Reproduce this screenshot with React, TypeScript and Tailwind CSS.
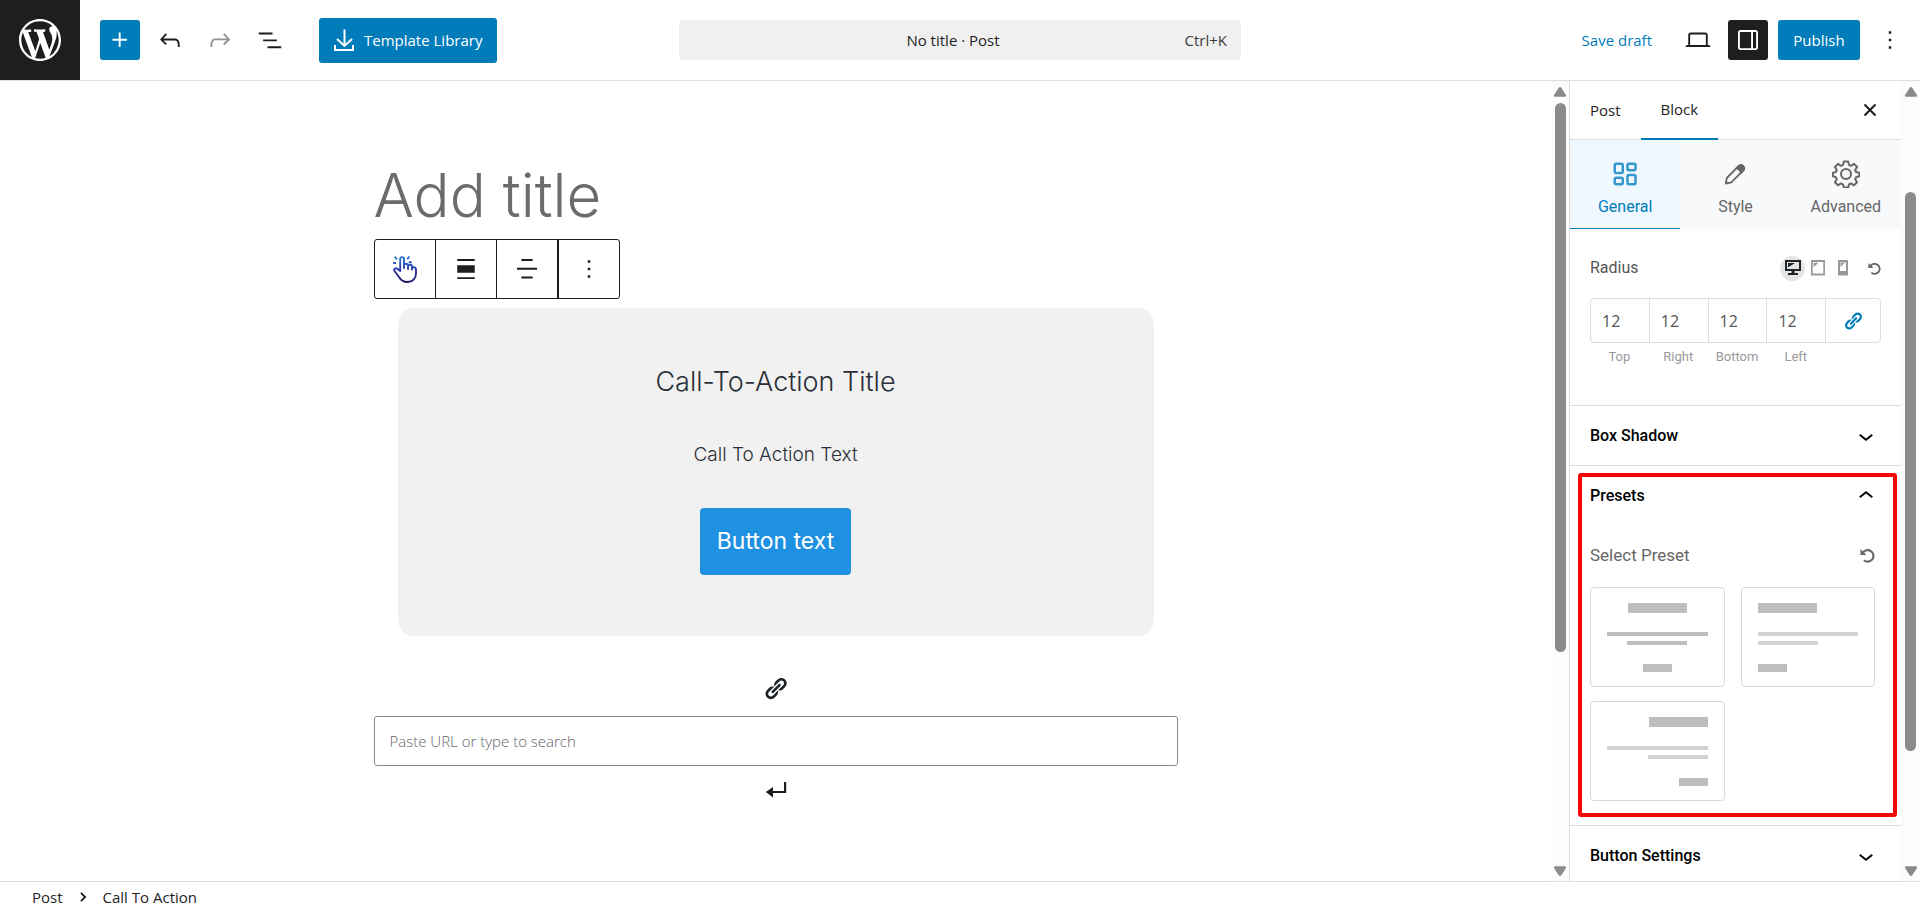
import type { ReactNode } from "react";

const INK = "#1e1e1e";

type Align = "center" | "left" | "right";

const presets: { align: Align; label: string; line: string }[] = [
  { align: "center", label: "Centered preset", line: "#bebebe" },
  { align: "left", label: "Left aligned preset", line: "#d3d3d3" },
  { align: "right", label: "Right aligned preset", line: "#d3d3d3" },
];

const sides = ["Top", "Right", "Bottom", "Left"];

/* ---------- icons ---------- */

function WordPressLogo() {
  return (
    <svg viewBox="0 0 20 20" className="size-[42px]" fill="#fff" aria-hidden>
      <path d="M20 10c0-5.51-4.49-10-10-10C4.48 0 0 4.49 0 10c0 5.52 4.48 10 10 10 5.51 0 10-4.48 10-10zM7.78 15.37L4.37 6.22c.55-.02 1.17-.08 1.17-.08.5-.06.44-1.13-.06-1.11 0 0-1.45.11-2.37.11-.18 0-.37 0-.58-.01C4.12 2.69 6.87 1.11 10 1.11c2.33 0 4.45.87 6.05 2.34-.68-.11-1.65.39-1.65 1.58 0 .74.45 1.36.9 2.1.35.61.55 1.36.55 2.46 0 1.49-1.4 5-1.4 5l-3.03-8.37c.54-.02.82-.17.82-.17.5-.05.44-1.25-.06-1.22 0 0-1.44.12-2.38.12-.87 0-2.33-.12-2.33-.12-.5-.03-.56 1.2-.06 1.22l.92.08 1.26 3.41zM17.41 10c.24-.64.74-1.87.43-4.25.7 1.29 1.05 2.71 1.05 4.25 0 3.29-1.73 6.24-4.4 7.78.97-2.59 1.94-5.2 2.92-7.78zM6.1 18.09C3.12 16.65 1.11 13.53 1.11 10c0-1.3.23-2.48.72-3.59C3.25 10.3 4.67 14.2 6.1 18.09zm4.03-6.63l2.58 6.98c-.86.29-1.76.45-2.71.45-.79 0-1.57-.11-2.29-.33.81-2.38 1.62-4.74 2.42-7.1z" />
    </svg>
  );
}

function Glyph({ d, className = "size-[30px]" }: { d: string; className?: string }) {
  return (
    <svg viewBox="0 0 24 24" className={className} fill="currentColor" aria-hidden>
      <path d={d} />
    </svg>
  );
}

const glyphs = {
  plus: "M11 12.5V17.5H12.5V12.5H17.5V11H12.5V6H11V11H6V12.5H11Z",
  undo: "M18.3 11.7c-.6-.6-1.4-.9-2.3-.9H6.7l2.9-3.3-1.1-1-4.5 5L8.5 16l1-1-2.7-2.7H16c.5 0 .9.2 1.3.5 1 1 1 3.4 1 4.5v.3h1.5v-.2c0-1.5 0-4.3-1.5-5.7z",
  redo: "M15.6 6.5l-1.1 1 2.9 3.3H8c-.9 0-1.7.3-2.3.9-1.4 1.5-1.4 4.2-1.4 5.6v.2h1.5v-.3c0-1.1 0-3.5 1-4.5.3-.3.7-.5 1.3-.5h9.2L14.5 15l1.1 1.1 4.6-4.6-4.6-5z",
  listView: "M3 6h11v1.5H3V6Zm3.5 5.5h11V13h-11v-1.5ZM21 17H10v1.5h11V17Z",
  more: "M13 19h-2v-2h2v2zm0-6h-2v-2h2v2zm0-6h-2V5h2v2z",
  chevronDown: "M17.5 11.6L12 16l-5.5-4.4.9-1.2L12 14l4.5-3.6 1 1.2z",
  chevronUp: "M6.5 12.4L12 8l5.5 4.4-.9 1.2L12 10l-4.5 3.6-1-1.2z",
  laptop: "M20.5 16h-.7V8c0-1.1-.9-2-2-2H6.2c-1.1 0-2 .9-2 2v8h-.7c-.8 0-1.5.7-1.5 1.5h20c0-.8-.7-1.5-1.5-1.5zM5.7 8c0-.3.2-.5.5-.5h11.6c.3 0 .5.2.5.5v8H5.7V8z",
  sidebar: "M18 4H6c-1.1 0-2 .9-2 2v12c0 1.1.9 2 2 2h12c1.1 0 2-.9 2-2V6c0-1.1-.9-2-2-2zM14.5 18.5H6c-.3 0-.5-.2-.5-.5V6c0-.3.2-.5.5-.5h8.5v13zm4-.5c0 .3-.2.5-.5.5h-2v-13h2c.3 0 .5.2.5.5v12z",
  alignNone: "M19 5.5H5V4h14v1.5ZM19 20H5v-1.5h14V20ZM5 9h14v6H5V9Z",
  justifyText: "M7.5 5.5h9V4h-9v1.5Zm-3.5 7h16V11H4v1.5Zm3.5 7h9V18h-9v1.5Z",
};

function CloseIcon() {
  return (
    <svg viewBox="0 0 14 14" className="size-[14px]" fill="none" stroke={INK} strokeWidth="2" aria-hidden>
      <path d="M1.5 1.5l11 11M12.5 1.5l-11 11" />
    </svg>
  );
}

function DownloadIcon() {
  return (
    <svg viewBox="0 0 20 22" className="h-[22px] w-5" fill="none" stroke="currentColor" strokeWidth="2" aria-hidden>
      <path d="M10.5.5V17M3 10l7.5 7L18 10" />
      <path d="M1 16v5h18v-5" />
    </svg>
  );
}

function TapIcon() {
  return (
    <svg viewBox="0 0 24 28" className="h-7 w-6" fill="none" stroke="url(#tap)" strokeWidth="1.9" strokeLinecap="round" strokeLinejoin="round" aria-hidden>
      <defs>
        <linearGradient id="tap" x1="0" y1="0" x2="0" y2="28" gradientUnits="userSpaceOnUse">
          <stop stopColor="#2f7fe0" />
          <stop offset=".55" stopColor="#2a35a8" />
          <stop offset="1" stopColor="#1c1464" />
        </linearGradient>
      </defs>
      <path d="M7.2 16V4a1.9 1.9 0 0 1 3.8 0v9M11 10.5a2 2 0 0 1 4 .5v3M15 11.5a2 2 0 0 1 4 .5v2.5M19 12.5c2-.8 4 0 4 2v4c0 5-3.5 8.5-8.5 8.5-4 0-6.500-1.500-8.500-5L1.500 16c-1.200-2 1-3.500 2.700-2.200L7.200 16" />
      <path d="M2.3 2.3l1.3 1.5M.9 8h1.5M16 2l-1.3 1.6M16.5 7.2H18" />
    </svg>
  );
}

function ChainIcon({ className }: { className: string }) {
  return (
    <svg viewBox="0 0 20 20" className={className} fill="currentColor" aria-hidden>
      <path d="M17.74 2.76c1.68 1.69 1.68 4.41 0 6.1l-1.53 1.52c-1.12 1.12-2.7 1.47-4.14 1.09l2.62-2.61.76-.77.76-.76c.84-.84.84-2.2 0-3.04-.84-.85-2.2-.85-3.04 0l-.77.76-3.38 3.38c-.37-1.44-.02-3.02 1.1-4.14l1.52-1.53c1.69-1.68 4.42-1.68 6.1 0zM8.59 13.43l5.34-5.34c.42-.42.42-1.1 0-1.52-.44-.43-1.13-.39-1.53 0l-5.33 5.34c-.42.42-.42 1.1 0 1.52.44.43 1.13.39 1.52 0zm-.76 2.29l4.14-4.15c.38 1.44.03 3.02-1.09 4.14l-1.52 1.53c-1.69 1.68-4.41 1.68-6.1 0-1.68-1.68-1.68-4.42 0-6.1l1.53-1.52c1.12-1.12 2.7-1.47 4.14-1.1l-4.14 4.15c-.85.84-.85 2.2 0 3.05.84.84 2.2.84 3.04 0z" />
    </svg>
  );
}

function EnterIcon() {
  return (
    <svg viewBox="0 0 22 18" className="h-[18px] w-[22px]" fill={INK} aria-hidden>
      <path d="M19 1h2.2v11H8v4.5L.8 11 8 6v4h11z" />
    </svg>
  );
}

function ResetIcon({ className }: { className: string }) {
  return (
    <svg viewBox="0 0 14 14" className={className} fill="none" stroke="#666" strokeWidth="2" aria-hidden>
      <path d="M2.5 4.7A5.4 5.4 0 1 1 3.6 11.4" />
      <path d="M.4 1v5.5h5.5z" fill="#666" stroke="none" />
    </svg>
  );
}

function GridIcon() {
  return (
    <svg viewBox="0 0 24 24" className="size-6" fill="none" stroke="currentColor" strokeWidth="2.5" aria-hidden>
      <rect x="1.75" y="1.75" width="8" height="9.25" rx="1.5" />
      <rect x="14.5" y="1.75" width="8" height="6.5" rx="1.5" />
      <rect x="1.75" y="15.75" width="8" height="6.5" rx="1.5" />
      <rect x="14.5" y="13" width="8" height="9.25" rx="1.5" />
    </svg>
  );
}

function PencilIcon() {
  return (
    <svg viewBox="0 0 24 24" className="size-6" fill="none" stroke="currentColor" strokeWidth="1.8" strokeLinejoin="round" aria-hidden>
      <path d="M2.8 21.5l1-5.5L15.5 4.2c2.8-2.6 7 1.5 4.6 4.4L8.3 20.3z" />
      <path d="M13.5 6.2l2.6-2.5c3-2 6.5 1.6 4.5 4.5L18 10.8c-.5-2-2.5-4-4.5-4.6z" fill="currentColor" />
    </svg>
  );
}

function GearIcon() {
  return (
    <svg viewBox="0 0 28 28" className="size-7" fill="none" stroke="currentColor" strokeWidth="2" strokeLinejoin="round" aria-hidden>
      <circle cx="14" cy="14" r="5" />
      <path d="M11.8 1.5h4.4l.8 3.4 2 .9 3-1.9 3.1 3.1-1.9 3 .9 2 3.2.7v3.6l-3.2.9-.9 2 1.9 3-3.1 3.1-3-1.9-2 .9-.8 3.2h-4.4l-.8-3.2-2-.9-3 1.9-3.1-3.1 1.9-3-.9-2-3-.9v-3.6l3-.7.9-2-1.9-3L6 3.9l3 1.9 2-.9z" />
    </svg>
  );
}

function DesktopIcon() {
  return (
    <svg viewBox="0 0 16 16" className="size-4" aria-hidden>
      <path fill="#1e2328" fillRule="evenodd" d="M0 0h16v11H9.5v2H13v2H3v-2h3.5v-2H0zM2 2v7h12V2z" />
      <path d="M3 3h7L3 7.5z" fill="#1e2328" />
    </svg>
  );
}

function TabletIcon() {
  return (
    <svg viewBox="0 0 14 16" className="h-4 w-[14px]" fill="#999" aria-hidden>
      <path fillRule="evenodd" d="M0 0h14v15.5H0zM1.7 2v11.5h10.6V2z" />
      <path d="M2.5 2.8h5l-5 4.5z" />
    </svg>
  );
}

function PhoneIcon() {
  return (
    <svg viewBox="0 0 10 16" className="h-4 w-[10px]" fill="#999" aria-hidden>
      <path fillRule="evenodd" d="M0 0h10v15.5H0zM2 2.5v8.500h6V2.5z" />
      <path d="M2.5 3h4l-4 4z" />
    </svg>
  );
}

/* ---------- shared bits ---------- */

function ScrollArrow({ className = "" }: { className?: string }) {
  return (
    <svg viewBox="0 0 12 10" className={`h-[10px] w-3 ${className}`} fill="#8b8b8b">
      <path d="M6 0c.6 0 1 .4 1.3.8L12 8c.3 1-.2 1.8-1 1.8H1C.2 9.8-.3 9 0 8L4.7.8C5 .4 5.4 0 6 0z" />
    </svg>
  );
}

function Scrollbar({ side, children }: { side: "canvas" | "sidebar"; children: ReactNode }) {
  return (
    <div
      aria-hidden
      className={`flex shrink-0 flex-col items-center bg-[#fcfcfc] pt-[6px] pb-[5px] ${side === "canvas" ? "w-[18px]" : "w-[19px]"}`}
    >
      <ScrollArrow />
      <div className="flex w-full flex-1 flex-col items-center">{children}</div>
      <ScrollArrow className="rotate-180" />
    </div>
  );
}

function PanelHeader({ title, open = false }: { title: string; open?: boolean }) {
  return (
    <h2>
      <button
        type="button"
        aria-expanded={open}
        className="flex h-[59px] w-full items-center justify-between px-5 font-[Roboto,sans-serif] text-base font-medium text-black"
      >
        {title}
        <Glyph d={open ? glyphs.chevronUp : glyphs.chevronDown} />
      </button>
    </h2>
  );
}

function PresetCard({ align, label, line }: { align: Align; label: string; line: string }) {
  const items = { center: "items-center", left: "items-start", right: "items-end" }[align];
  return (
    <button
      type="button"
      aria-label={label}
      className={`flex h-[100px] flex-col rounded border border-[#d9d9d9] px-4 pt-[15px] ${items}`}
    >
      <span className="h-[10px] w-[59px] bg-[#bebebe]" />
      <span className="mt-[19px] h-1 w-full" style={{ backgroundColor: line }} />
      <span className="mt-[5px] h-1 w-[60px]" style={{ backgroundColor: line }} />
      <span className="mt-[19px] h-2 w-[29px] bg-[#bebebe]" />
    </button>
  );
}

/* ---------- regions ---------- */

function TopBar() {
  return (
    <header className="flex h-[81px] shrink-0 items-stretch border-b border-[#ddd]">
      <div className="flex min-w-0 flex-1 items-center">
        <a href="#dashboard" aria-label="View posts" className="mr-5 flex h-full w-20 items-center justify-center bg-[#1e1e1e]">
          <WordPressLogo />
        </a>
        <button type="button" aria-label="Block inserter" className="flex size-10 items-center justify-center rounded-[3px] bg-[#007cba] text-white">
          <Glyph d={glyphs.plus} />
        </button>
        <button type="button" aria-label="Undo" className="ml-[10px] flex size-10 items-center justify-center">
          <Glyph d={glyphs.undo} />
        </button>
        <button type="button" aria-label="Redo" className="ml-[10px] flex size-10 items-center justify-center text-[#949494]">
          <Glyph d={glyphs.redo} />
        </button>
        <button type="button" aria-label="Document overview" className="ml-[10px] flex size-10 items-center justify-center">
          <Glyph d={glyphs.listView} />
        </button>
        <button type="button" className="ml-[29px] flex h-[45px] items-center gap-[10px] rounded-[3px] bg-[#007cba] px-[15px] text-white">
          <DownloadIcon />
          Template Library
        </button>
      </div>
      <div className="flex w-[562px] items-center">
        <button type="button" className="grid h-10 w-full grid-cols-[1fr_auto_1fr] items-center rounded bg-[#f0f0f0] pr-[14px]">
          <span className="col-start-2">No title · Post</span>
          <span className="text-right text-[#3c3c3c]">Ctrl+K</span>
        </button>
      </div>
      <div className="flex min-w-0 flex-1 items-center justify-end">
        <button type="button" className="mr-[26px] text-[#007cba]">Save draft</button>
        <button type="button" aria-label="View" className="mr-[10px] flex size-10 items-center justify-center">
          <Glyph d={glyphs.laptop} />
        </button>
        <button type="button" aria-label="Settings" aria-pressed className="flex size-10 items-center justify-center rounded-[3px] bg-[#1e1e1e] text-white">
          <Glyph d={glyphs.sidebar} />
        </button>
        <button type="button" className="mx-[10px] h-10 w-[82px] rounded-[3px] bg-[#007cba] text-white">Publish</button>
        <button type="button" aria-label="Options" className="mr-[10px] flex size-10 items-center justify-center">
          <Glyph d={glyphs.more} />
        </button>
      </div>
    </header>
  );
}

function Canvas() {
  return (
    <main className="flex min-w-0 flex-1">
      <div className="flex-1">
        <div className="mx-auto w-full max-w-[804px] pt-[78px]">
          <h1 className="font-[Inter,sans-serif] text-[60px] leading-[72px] font-light text-[#6b6b6b]">Add title</h1>
          <div role="toolbar" aria-label="Block tools" className="mt-2 flex h-[60px] w-[246px] rounded-[3px] border border-[#1e1e1e]">
            <button type="button" aria-label="Call To Action" className="flex flex-1 items-center justify-center">
              <TapIcon />
            </button>
            <button type="button" aria-label="Align" className="flex flex-1 items-center justify-center border-l border-[#1e1e1e]">
              <Glyph d={glyphs.alignNone} />
            </button>
            <button type="button" aria-label="Align text" className="flex flex-1 items-center justify-center border-l border-[#1e1e1e]">
              <Glyph d={glyphs.justifyText} />
            </button>
            <button type="button" aria-label="More options" className="flex flex-1 items-center justify-center border-l-2 border-[#1e1e1e]">
              <Glyph d={glyphs.more} />
            </button>
          </div>

          <section className="mx-6 mt-[9px] flex h-[328px] flex-col items-center rounded-2xl bg-[#f1f1f1] pt-14 font-[Inter,sans-serif] text-[#2a2f38]">
            <h2 className="text-[27px] leading-9 font-light">Call-To-Action Title</h2>
            <p className="mt-10 text-[19px] leading-[30px] font-light">Call To Action Text</p>
            <button type="button" className="mt-[38px] h-[67px] rounded-[4px] bg-[#1f91e2] px-[17px] text-[23px] text-white">
              Button text
            </button>
          </section>

          <div className="mt-10 flex flex-col items-center">
            <ChainIcon className="size-[25px] text-[#1e2328]" />
            <input
              type="text"
              aria-label="Link URL"
              placeholder="Paste URL or type to search"
              className="mt-[15px] h-[50px] w-full rounded-[3px] border border-[#8a8a8a] px-[15px] placeholder:font-light placeholder:text-[#666]"
            />
            <button type="button" aria-label="Submit" className="mt-[15px]">
              <EnterIcon />
            </button>
          </div>
        </div>
      </div>
      <Scrollbar side="canvas">
        <div className="mt-[6px] h-5/7 w-[11px] rounded-full bg-[#8b8b8b]" />
      </Scrollbar>
    </main>
  );
}

function Sidebar() {
  return (
    <aside className="flex w-[351px] shrink-0 border-l border-[#ddd]">
      <div className="flex-1 overflow-hidden">
        <div className="flex h-[59px] items-stretch border-b border-[#ddd]">
          <button type="button" className="px-5">Post</button>
          <button type="button" aria-current="true" className="-mb-px border-b-2 border-[#007cba] px-5">Block</button>
          <button type="button" aria-label="Close settings" className="mr-6 ml-auto">
            <CloseIcon />
          </button>
        </div>

        <nav className="grid grid-cols-3 bg-[#f8f9fb] font-[Roboto,sans-serif] text-base text-[#666]">
          <button type="button" className="flex h-[89px] flex-col items-center justify-end border-b border-[#007cba] bg-[#eff8ff] pb-[9px] text-[#007cba]">
            <span className="flex h-7 items-center text-[#3597cd]"><GridIcon /></span>
            <span className="mt-[7px]">General</span>
          </button>
          <button type="button" className="flex h-[89px] flex-col items-center justify-end pb-[10px]">
            <span className="flex h-7 items-center"><PencilIcon /></span>
            <span className="mt-[7px]">Style</span>
          </button>
          <button type="button" className="flex h-[89px] flex-col items-center justify-end pb-[10px]">
            <span className="flex h-7 items-center"><GearIcon /></span>
            <span className="mt-[7px]">Advanced</span>
          </button>
        </nav>

        <section className="h-[176px] px-5 pt-[26px] font-[Roboto,sans-serif]">
          <div className="flex h-[26px] items-center text-base text-[#555]">
            <span className="flex-1">Radius</span>
            <button type="button" aria-label="Desktop" className="flex size-[25px] items-center justify-center rounded-full bg-[#e4e4e4]"><DesktopIcon /></button>
            <button type="button" aria-label="Tablet" className="ml-[6px]"><TabletIcon /></button>
            <button type="button" aria-label="Mobile" className="ml-[13px]"><PhoneIcon /></button>
            <button type="button" aria-label="Reset radius" className="ml-5"><ResetIcon className="size-[13px]" /></button>
          </div>
          <div className="mt-[17px] grid grid-cols-[59fr_59fr_59fr_59fr_56fr]">
            {sides.map((side) => (
              <div key={side} className="flex min-w-0 flex-col-reverse">
                <label htmlFor={`radius-${side}`} className="mt-[6px] text-center text-[13px] leading-4 text-[#999]">{side}</label>
                <input
                  id={`radius-${side}`}
                  type="text"
                  defaultValue="12"
                  className={`h-[45px] w-full border border-r-0 border-[#ddd] pl-[11px] font-['Open_Sans',sans-serif] text-base text-[#555] ${side === "Top" ? "rounded-l" : ""}`}
                />
              </div>
            ))}
            <button type="button" aria-label="Link sides" className="flex h-[45px] items-center justify-center rounded-r border border-[#ddd] text-[#007cba]">
              <ChainIcon className="size-5" />
            </button>
          </div>
        </section>

        <section className="border-t border-[#ddd]">
          <PanelHeader title="Box Shadow" />
        </section>

        <section className="relative border-t border-[#ddd] pb-6">
          <PanelHeader title="Presets" open />
          <div className="flex items-center justify-between pt-4 pr-[26px] pl-5 font-[Roboto,sans-serif] text-[17px] leading-7 text-[#666]">
            Select Preset
            <button type="button" aria-label="Reset preset"><ResetIcon className="size-[15px]" /></button>
          </div>
          <div className="grid grid-cols-2 gap-x-4 gap-y-[14px] pt-[18px] pr-[26px] pl-5">
            {presets.map((preset) => (
              <PresetCard key={preset.align} {...preset} />
            ))}
          </div>
          {/* highlight frame around the open panel */}
          <div className="pointer-events-none absolute top-[7px] right-1 bottom-2 left-2 rounded-[3px] border-4 border-[#f60606]" />
        </section>

        <section className="border-t border-[#ddd]">
          <PanelHeader title="Button Settings" />
        </section>
      </div>
      <Scrollbar side="sidebar">
        <div className="mt-[95px] h-8/11 w-[11px] rounded-full bg-[#8b8b8b]" />
      </Scrollbar>
    </aside>
  );
}

export default function App() {
  return (
    <div className="flex h-screen flex-col overflow-hidden bg-white font-['Open_Sans',sans-serif] text-[15px] text-[#1e1e1e]">
      <TopBar />
      <div className="flex min-h-0 flex-1">
        <Canvas />
        <Sidebar />
      </div>
      <footer className="h-[31px] shrink-0 border-t border-[#ddd]">
        <nav aria-label="Block breadcrumb" className="flex h-full items-center pl-8">
          <a href="#post">Post</a>
          <svg viewBox="0 0 8 12" className="mx-4 h-[10px] w-2" fill="none" stroke={INK} strokeWidth="2.2" aria-hidden>
            <path d="M1.5 1l5 5-5 5" />
          </svg>
          <a href="#cta">Call To Action</a>
        </nav>
      </footer>
    </div>
  );
}
